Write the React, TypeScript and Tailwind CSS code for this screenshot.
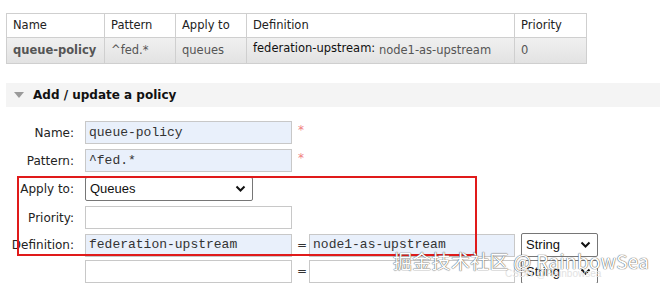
import React from "react";

const sans = "font-['DejaVu_Sans',Verdana,sans-serif]";
const mono = "font-['Liberation_Mono','Courier_New',monospace]";

function Chevron() {
  return (
    <svg width="11" height="8" viewBox="0 0 11 8" className="shrink-0">
      <path d="M1.5 1.5 L5.5 5.5 L9.5 1.5" fill="none" stroke="#111" strokeWidth="2" />
    </svg>
  );
}

function Select({ value, width }: { value: string; width: string }) {
  return (
    <div
      className={`flex h-[24px] items-center justify-between rounded-[2px] border border-[#767676] bg-white pl-[4px] pr-[6px] text-[13px] text-[#111] font-['Liberation_Sans',Arial,sans-serif] ${width}`}
    >
      <span>{value}</span>
      <Chevron />
    </div>
  );
}

function Field({ value, blue = true, width = "w-[207px]" }: { value?: string; blue?: boolean; width?: string }) {
  return (
    <div
      className={`flex h-[23px] items-center border border-[#c8c8c8] px-[3px] text-[13px] text-[#333] ${mono} ${width} ${blue ? "bg-[#e9f0fb]" : "bg-white"}`}
    >
      {value}
    </div>
  );
}

function Row({ label, children, className = "" }: { label: string; children: React.ReactNode; className?: string }) {
  return (
    <div className={`flex items-center ${className}`}>
      <div className="w-[74px] shrink-0 whitespace-nowrap text-right text-[12px] text-[#222]">{label}</div>
      <div className="ml-[11px] flex items-center">{children}</div>
    </div>
  );
}

export default function App() {
  const th = "border border-[#cfcfcf] px-[6px] text-left font-normal text-[#222]";
  const td = "border border-[#cfcfcf] px-[6px] text-[#555]";
  return (
    <div className={`relative h-[283px] w-[660px] overflow-hidden bg-white ${sans}`}>
      <div className="pl-[6px] pt-[13px]">
        <table className="border-collapse text-[11.5px]">
          <thead>
            <tr className="h-[24px] bg-white">
              <th className={`${th} w-[98px]`}>Name</th>
              <th className={`${th} w-[71px]`}>Pattern</th>
              <th className={`${th} w-[71px]`}>Apply to</th>
              <th className={`${th} w-[268px]`}>Definition</th>
              <th className={`${th} w-[72px]`}>Priority</th>
            </tr>
          </thead>
          <tbody>
            <tr className="h-[26px] bg-gradient-to-b from-[#f0f0f0] to-[#e2e2e2]">
              <td className={`${td} font-bold text-[#111]`}>queue-policy</td>
              <td className={td}>^fed.*</td>
              <td className={td}>queues</td>
              <td className={td}>
                <span className="relative -top-[2px] text-[#111]">federation-upstream:</span>{" "}
                <span>node1-as-upstream</span>
              </td>
              <td className={td}>0</td>
            </tr>
          </tbody>
        </table>
      </div>

      <div className="ml-[6px] mt-[19px] flex h-[24px] items-center bg-[#f4f4f4]">
        <svg width="10" height="6" viewBox="0 0 10 6" className="ml-[8px]">
          <path d="M0 0 L10 0 L5 6 Z" fill="#9a9a9a" />
        </svg>
        <span className="ml-[9px] text-[12px] font-bold text-[#111]">Add / update a policy</span>
      </div>

      <div className="mt-[14px] flex flex-col">
        <Row label="Name:">
          <Field value="queue-policy" />
          <span className="ml-[6px] -mt-[6px] text-[12px] text-[#f08080]">*</span>
        </Row>
        <Row label="Pattern:" className="mt-[5px]">
          <Field value="^fed.*" />
          <span className="ml-[6px] -mt-[6px] text-[12px] text-[#f08080]">*</span>
        </Row>
        <Row label="Apply to:" className="mt-[5px]">
          <Select value="Queues" width="w-[168px]" />
        </Row>
        <Row label="Priority:" className="mt-[5px]">
          <Field blue={false} />
        </Row>
        <Row label="Definition:" className="mt-[4px]">
          <Field value="federation-upstream" />
          <span className="ml-[5px] mr-[2px] text-[12px] text-[#333]">=</span>
          <Field value="node1-as-upstream" width="w-[206px]" />
          <div className="ml-[6px]">
            <Select value="String" width="w-[77px]" />
          </div>
        </Row>
        <Row label="" className="mt-[1px]">
          <Field blue={false} />
          <span className="ml-[5px] mr-[2px] text-[12px] text-[#333]">=</span>
          <Field blue={false} width="w-[206px]" />
          <div className="ml-[6px] mt-[2px]">
            <Select value="String" width="w-[77px]" />
          </div>
        </Row>
      </div>

      <div className="pointer-events-none absolute left-[17px] top-[176px] h-[80px] w-[460px] border-2 border-[#e01a1a]" />

      <div className="pointer-events-none absolute left-[505px] top-[266px] whitespace-nowrap text-[10px] text-[#e2e2e2] font-['Liberation_Sans',sans-serif]">
        CSDN @Rainbowsea
      </div>
      <div className="pointer-events-none absolute left-[393px] top-[248px] whitespace-nowrap text-[19px] leading-[25px] tracking-[0.3px] text-white [text-shadow:0_0_1px_#555,0_0_1px_#555] font-['Noto_Sans_CJK_SC',sans-serif]">
        掘金技术社区 @ RainbowSea
      </div>
    </div>
  );
}
